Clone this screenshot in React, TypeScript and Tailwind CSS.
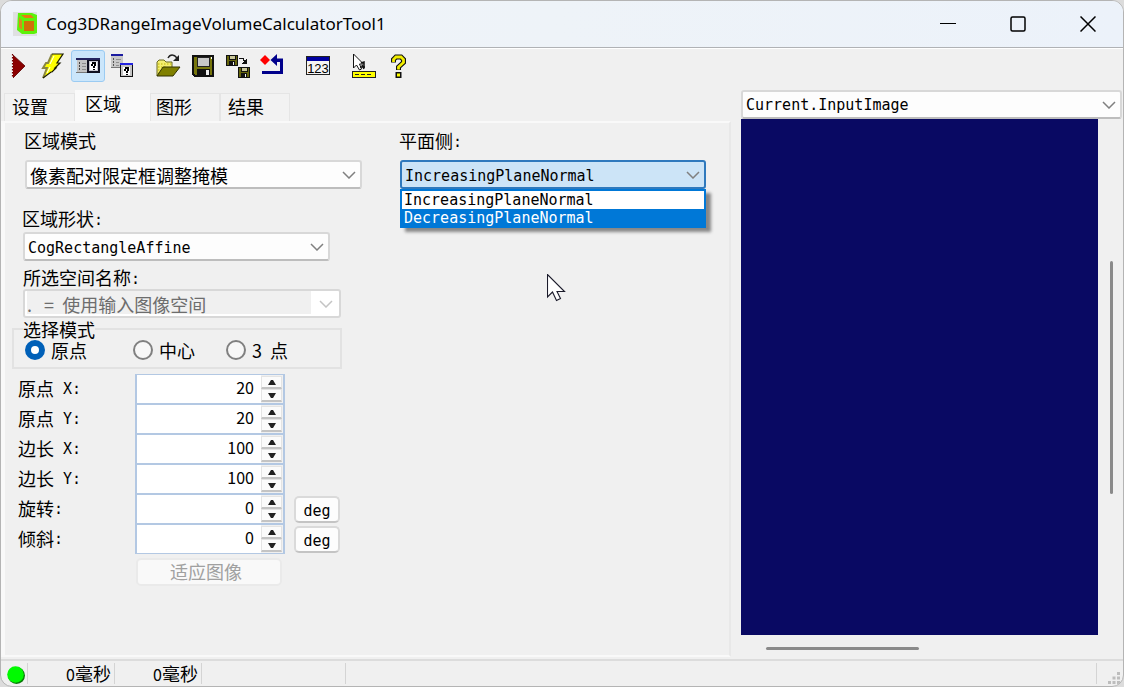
import React, { useState } from "react";

const CJK = "font-['Noto_Sans_CJK_SC',sans-serif]";
const MONO = "font-['DejaVu_Sans_Mono','Noto_Sans_CJK_SC',monospace] text-[15px]";
const LABEL = "flex h-[22px] items-center leading-[22px]";

function Latin({ children }: { children: React.ReactNode }) {
  return <span className="whitespace-pre pt-[3px] font-['DejaVu_Sans_Mono',monospace] text-[15px]">{children}</span>;
}

function Chevron({ className = "" }: { className?: string }) {
  return (
    <svg
      aria-hidden="true"
      viewBox="0 0 14 8"
      className={`pointer-events-none absolute right-[6px] top-1/2 h-2 w-[14px] -translate-y-1/2 ${className}`}
      fill="none"
      stroke="currentColor"
      strokeWidth="1.5"
    >
      <path d="M1 1l6 6 6-6" />
    </svg>
  );
}

type ComboProps = {
  id: string;
  label: string;
  value: string;
  textClass: string;
  boxClass?: string;
  tone?: string;
};

function Combo({ id, label, value, textClass, boxClass = "", tone = "border-[#d8d8d8] border-b-[#bdbdbd] bg-[#fdfdfd]" }: ComboProps) {
  return (
    <div className={`relative h-[29px] ${boxClass}`}>
      <select
        id={id}
        aria-label={label}
        className={`block h-full w-full appearance-none rounded-[3px] border-2 pl-[3px] pr-6 text-black outline-none ${tone} ${textClass}`}
      >
        <option>{value}</option>
      </select>
      <Chevron className="text-[#808080]" />
    </div>
  );
}

function IconRun() {
  return (
    <svg viewBox="0 0 26 26" className="size-[26px]">
      <path d="M8 2v23L20 13z" fill="#8b0000" />
      <path d="M8 2l12 11L8 25" fill="none" stroke="#5a0000" strokeWidth=".8" />
      <path d="M7.500 1v24" stroke="#700000" strokeWidth="1.2" strokeDasharray="1.5 1.5" />
    </svg>
  );
}
function IconBolt() {
  return (
    <svg viewBox="0 0 26 26" className="size-[26px]">
      <path d="M12 1h11l-6 9h3l-5 5h1l-4 4h-1l-8 6 3-10H3l4-5h1z" fill="#ffff00" />
      <path d="M12 1L8 10H6l-3 5h4L3 25" fill="none" stroke="#8a8740" strokeWidth="2" />
      <path d="M12 1h11l-6 9h3l-5 5h1l-4 4h-1l-8 6" fill="none" stroke="#1a1a00" strokeWidth="1.200" />
      <path d="M14 3l-4 8M10 14l-3 6" stroke="#fff" />
    </svg>
  );
}
function IconPanels() {
  return (
    <svg viewBox="0 0 26 26" className="size-[26px]" shapeRendering="crispEdges">
      <path d="M2 7h11v12H2z" fill="#c4c4c4" />
      <path d="M1 19h12v1H1z" fill="#777" />
      <path d="M12 6h13v14H12z" fill="#101020" />
      <path d="M14 8h9v10h-9z" fill="#c8c8d0" />
      <path d="M1 5h24v2H1z" fill="#252560" />
      <path d="M4 9h1v2H4zM4 12h1v2H4zM4 15h1v2H4z" fill="#444" />
      <path d="M7 10h4M7 13h4M7 16h4" stroke="#8c8c8c" />
      <path d="M15 9h7v8h-7z" fill="#fff" />
      <path d="M17 9h4v2h-4zM19 11h2v2h-2zM16 11h2v2h-2zM18 13h2v2h-2zM18 16h2v1h-2z" fill="#000" />
    </svg>
  );
}
function IconFloat() {
  return (
    <svg viewBox="0 0 26 26" className="size-[26px]" shapeRendering="crispEdges">
      <path d="M1 3h12v12H1z" fill="#c8c8c8" />
      <path d="M1 14h10v1H1z" fill="#777" />
      <path d="M1 1h12v2H1z" fill="#1c1ca0" />
      <path d="M3 5h1v2H3zM3 8h1v2H3zM3 11h1v2H3z" fill="#555" />
      <path d="M6 6h5M6 9h3M6 12h3" stroke="#909090" />
      <path d="M10 11h13v13H10z" fill="#111" />
      <path d="M11 12h11v11H11z" fill="#c4c4c4" />
      <path d="M10 10h13v2H10z" fill="#2424e0" />
      <path d="M13 14h7v8h-7z" fill="#fff" />
      <path d="M15 14h4v2h-4zM17 16h2v2h-2zM14 16h2v2h-2zM16 18h2v2h-2zM16 21h2v1h-2z" fill="#000" />
    </svg>
  );
}
function IconOpen() {
  return (
    <svg viewBox="0 0 26 26" className="size-[26px]">
      <path d="M2 23V9l2-2h5l2 2h6v5" fill="#f4ee70" stroke="#6b6b20" />
      <path d="M3 11h13M3 14h8M3 17h5M3 20h3" stroke="#bcb400" strokeDasharray="1.5 1.5" />
      <path d="M2 23L8 14h17l-7 9z" fill="#808000" stroke="#333300" />
      <path d="M13 5c2-4 6-4 9 0" fill="none" stroke="#222" strokeWidth="1.4" />
      <path d="M24 2v6h-6z" fill="#222" />
    </svg>
  );
}
function IconSave() {
  return (
    <svg viewBox="0 0 26 26" className="size-[26px]" shapeRendering="crispEdges">
      <path d="M3 3h20v20H5l-2-2z" fill="#77760c" stroke="#111" strokeWidth="2" />
      <path d="M7 4h12v9H7z" fill="#c8c8c8" stroke="#222" />
      <path d="M7 16h13v7H7z" fill="#111" />
      <path d="M16 17h3v5h-3z" fill="#eee" />
      <path d="M21 4h1v2h-1z" fill="#fff" />
    </svg>
  );
}
function IconSaveSet() {
  return (
    <svg viewBox="0 0 26 26" className="size-[26px]" shapeRendering="crispEdges">
      <g id="disk">
        <path d="M1 2h11v10H1z" fill="#66650c" stroke="#111" />
        <path d="M4 2h6v4H4z" fill="#c9c79a" stroke="#111" />
        <path d="M4 8h6v4H4z" fill="#111" />
        <path d="M8 9h1v3H8z" fill="#eee" />
      </g>
      <use href="#disk" x="12" y="12" />
      <path d="M14 5h4v2h2v2" fill="none" stroke="#111" />
      <path d="M22 5v6h-6z" fill="#111" />
    </svg>
  );
}
function IconReset() {
  return (
    <svg viewBox="0 0 26 26" className="size-[26px]">
      <path d="M5 2l5 5-5 5-5-5z" fill="#ff0000" />
      <path d="M10.500 7L17 1v4.500h6V21H2v-3h18V9h-3v4z" fill="#00008b" />
    </svg>
  );
}
function IconNumbers() {
  return (
    <svg viewBox="0 0 26 26" className="size-[26px]">
      <rect x="1.500" y="3.500" width="23" height="18" fill="#f4f4f4" stroke="#222" />
      <rect x="2" y="4" width="22" height="4" fill="#0000a0" />
      <text x="13" y="20" textAnchor="middle" fill="#000" className="font-['Liberation_Sans',sans-serif] text-[13px]">
        123
      </text>
    </svg>
  );
}
function IconMeasure() {
  return (
    <svg viewBox="0 0 26 26" className="size-[26px]">
      <path d="M3.500 1v14l3-3 3 5 2-1-2-5h4z" fill="#fff" stroke="#111" />
      <path d="M11 10l3-1v6M10 14h5M12 12l2 4" fill="none" stroke="#111" strokeWidth="1.500" />
      <rect x="2.500" y="18.500" width="23" height="6" fill="#ffff00" stroke="#222" />
      <path d="M5 21.500h18" stroke="#222" strokeDasharray="4 2" />
    </svg>
  );
}
function IconHelp() {
  return (
    <svg viewBox="0 0 26 26" className="size-[26px]" fill="none">
      <path d="M8.500 9.500v-3L11 4h5l2.500 2.500v3l-5 4.500v3" stroke="#111" strokeWidth="5" />
      <path d="M10.500 19h6v6h-6z" fill="#111" />
      <path d="M8.500 9v-2.500L11 4h5l2.500 2.500v3l-5 4.500v2.500" stroke="#f2ee00" strokeWidth="2.800" />
      <path d="M12 20.500h3v3h-3z" fill="#ffff00" />
    </svg>
  );
}

const toolGroups: { name: string; icon: React.ReactNode; on?: boolean }[][] = [
  [
    { name: "Run", icon: <IconRun /> },
    { name: "Electric mode", icon: <IconBolt /> },
    { name: "Local display", icon: <IconPanels />, on: true },
    { name: "Floating display", icon: <IconFloat /> },
  ],
  [
    { name: "Open", icon: <IconOpen /> },
    { name: "Save", icon: <IconSave /> },
    { name: "Save as", icon: <IconSaveSet /> },
    { name: "Reset", icon: <IconReset /> },
  ],
  [{ name: "Results", icon: <IconNumbers /> }],
  [
    { name: "Tooltips", icon: <IconMeasure /> },
    { name: "Help", icon: <IconHelp /> },
  ],
];

function TitleBar() {
  return (
    <header className="flex h-[47px] shrink-0 items-center border-b border-[#b0b2b5] bg-gradient-to-r from-[#eff3fa] via-[#eef3f8] to-[#ecf2fa] pl-3">
      <svg viewBox="0 0 24 24" className="size-6" aria-hidden="true">
        <rect width="24" height="24" fill="#dfe0e2" />
        <path d="M5 1h14l5 2v18l-3 1H9l-5-4z" fill="#5cf20c" />
        <path d="M8 3h10l3 3h-9z" fill="#e87a10" />
        <path d="M6 5l3 4v9l-3-3z" fill="#d8891c" />
        <rect x="11" y="9" width="10" height="10" fill="#cf7007" />
      </svg>
      <h1 className="pl-[9px] font-['Noto_Sans',sans-serif] text-[17px] leading-6 text-black">
        Cog3DRangeImageVolumeCalculatorTool1
      </h1>
      <div className="ml-auto flex h-full">
        <button aria-label="Minimize" className="grid w-[70px] place-items-center">
          <svg viewBox="0 0 16 16" className="size-4" stroke="#000"><path d="M0 7.500h16" /></svg>
        </button>
        <button aria-label="Maximize" className="grid w-[70px] place-items-center">
          <svg viewBox="0 0 16 16" className="size-4" stroke="#000" strokeWidth="1.500" fill="none">
            <rect x="1" y="1" width="14" height="14" rx="1.500" />
          </svg>
        </button>
        <button aria-label="Close" className="grid w-[70px] place-items-center">
          <svg viewBox="0 0 16 16" className="size-4" stroke="#000" strokeWidth="1.500"><path d="M.5.5l15 15M15.500.5l-15 15" /></svg>
        </button>
      </div>
    </header>
  );
}

function Toolbar() {
  return (
    <div role="toolbar" aria-label="Tools" className="flex h-[42px] shrink-0 gap-[11px] border-t border-white pt-px">
      {toolGroups.map((group, i) => (
        <div key={i} className="flex gap-px">
          {group.map((t) => (
            <button
              key={t.name}
              aria-label={t.name}
              aria-pressed={t.on}
              className={`grid h-8 w-[34px] place-items-center rounded-[3px] border ${
                t.on ? "border-[#9bcbf2] bg-[#cbe6fb]" : "border-transparent"
              }`}
            >
              {t.icon}
            </button>
          ))}
        </div>
      ))}
    </div>
  );
}

const tabs = [
  { name: "设置", box: "w-[71px] pl-[7px]" },
  { name: "区域", box: "w-[75px] pl-[9px]" },
  { name: "图形", box: "w-[70px] pl-[5px]" },
  { name: "结果", box: "w-[70px] pl-[7px]" },
];

function Tabs() {
  const [active, setActive] = useState("区域");
  return (
    <div role="tablist" className="flex h-[31px] items-end pl-[3px] text-[18px]">
      {tabs.map((t) => (
        <button
          key={t.name}
          role="tab"
          aria-selected={active === t.name}
          onClick={() => setActive(t.name)}
          className={`border border-b-0 text-left ${t.box} ${
            active === t.name
              ? "h-[31px] border-[#fafafa] bg-[#fafafa] pb-[5px] leading-[25px]"
              : "h-7 border-[#e5e5e5] bg-[#f2f2f2] pb-[3px] leading-6"
          }`}
        >
          {t.name}
        </button>
      ))}
    </div>
  );
}

const fields: { id: string; cjk: string; latin: string; value: number; unit?: string }[] = [
  { id: "origin-x", cjk: "原点", latin: " X:", value: 20 },
  { id: "origin-y", cjk: "原点", latin: " Y:", value: 20 },
  { id: "side-x", cjk: "边长", latin: " X:", value: 100 },
  { id: "side-y", cjk: "边长", latin: " Y:", value: 100 },
  { id: "rotation", cjk: "旋转", latin: ":", value: 0, unit: "deg" },
  { id: "skew", cjk: "倾斜", latin: ":", value: 0, unit: "deg" },
];

const SPIN =
  "grid flex-1 place-items-center border border-b-2 border-[#e4e4e4] border-b-[#c4c4c4] bg-[#fbfbfb]";

function Field({ f }: { f: (typeof fields)[number] }) {
  const [value, setValue] = useState(f.value);
  return (
    <div className="flex h-[30px] items-center">
      <label htmlFor={f.id} className="flex h-full w-[117px] items-center pb-[3px] leading-[22px]">
        {f.cjk}
        <Latin>{f.latin}</Latin>
      </label>
      <div className="flex h-full w-[150px] border-2 border-y border-[#b3c8e3] bg-white">
        <input
          id={f.id}
          inputMode="decimal"
          value={value}
          onChange={(e) => setValue(Number(e.target.value) || 0)}
          className="min-w-0 flex-1 bg-transparent pb-1 pr-[7px] text-right text-[16px] outline-none"
        />
        <div className="flex w-[22px] flex-col bg-[#f0f0f0] py-px pr-px">
          <button aria-label="Increase" onClick={() => setValue(value + 1)} className={SPIN}>
            <svg viewBox="0 0 8 5" className="h-[5px] w-2"><path d="M0 5l3-5h2l3 5z" fill="#222" /></svg>
          </button>
          <button aria-label="Decrease" onClick={() => setValue(value - 1)} className={SPIN}>
            <svg viewBox="0 0 8 5" className="h-[5px] w-2"><path d="M0 0h8L5 5H3z" fill="#222" /></svg>
          </button>
        </div>
      </div>
      {f.unit && (
        <button className={`ml-[9px] h-[27px] w-[46px] rounded-[5px] border-2 border-[#dadada] border-b-[#c4c4c4] bg-[#fdfdfd] pt-[3px] leading-5 ${MONO}`}>
          {f.unit}
        </button>
      )}
    </div>
  );
}

const modes = [
  { name: "原点", box: "w-[108px]" },
  { name: "中心", box: "w-[93px]" },
  { name: "3\u00a0\u00a0点", box: "" },
];

function RegionForm() {
  const [mode, setMode] = useState("原点");
  return (
    <div className="w-[350px] shrink-0">
      <label htmlFor="region-mode" className={`ml-3 ${LABEL}`}>区域模式</label>
      <Combo id="region-mode" label="区域模式" value="像素配对限定框调整掩模" textClass="pb-[2px] text-[18px]" boxClass="ml-[13px] mt-[9px]" />

      <label htmlFor="region-shape" className={`ml-[10px] mt-[18px] ${LABEL}`}>
        区域形状<Latin>:</Latin>
      </label>
      <Combo id="region-shape" label="区域形状" value="CogRectangleAffine" textClass={`pt-[3px] ${MONO}`} boxClass="ml-[11px] mt-[3px] w-[307px]" />

      <label htmlFor="space-name" className={`ml-[11px] mt-[5px] ${LABEL}`}>
        所选空间名称<Latin>:</Latin>
      </label>
      <div className="relative ml-[11px] mt-px h-[29px] w-[318px] rounded-[3px] border-2 border-[#d8d8d8] bg-white pb-[2px] pl-[2px] pr-7">
        <select
          id="space-name"
          disabled
          className="block h-full w-full appearance-none bg-[#f0f0f0] text-[18px] text-[#6d6d6d] opacity-100"
        >
          <option>.&nbsp;&nbsp;&nbsp;=&nbsp;&nbsp;使用输入图像空间</option>
        </select>
        <Chevron className="text-[#c4c4c4]" />
      </div>

      <fieldset className="mt-[3px] w-[330px] border-2 border-[#e2e2e2] pb-[5px] pl-[11px]">
        <legend className="-ml-[2px] leading-4">选择模式</legend>
        <div className="mt-px flex h-6 items-center">
          {modes.map((m) => (
            <label key={m.name} className={`flex items-center gap-[6px] leading-[22px] ${m.box}`}>
              <input
                type="radio"
                name="select-mode"
                checked={mode === m.name}
                onChange={() => setMode(m.name)}
                className="size-5 appearance-none rounded-full border-2 border-[#808080] bg-[#f7f7f7] checked:border-6 checked:border-[#0060b8] checked:bg-white"
              />
              {m.name}
            </label>
          ))}
        </div>
      </fieldset>

      <div className="ml-[6px] mt-[5px]">
        {fields.map((f) => (
          <Field key={f.id} f={f} />
        ))}
      </div>
      <button disabled className="ml-[124px] mt-1 block h-7 w-[146px] rounded-[5px] border-2 border-[#eaeaea] bg-[#f9f9f9] pb-[3px] pr-[6px] leading-5 text-[#a0a0a0]">
        适应图像
      </button>
    </div>
  );
}

function PlaneSide() {
  return (
    <div className="w-[306px]">
      <label htmlFor="plane-side" className={`-ml-px ${LABEL}`}>平面侧<Latin>:</Latin></label>
      <div className="relative mt-[9px]">
        <Combo
          id="plane-side"
          label="平面侧"
          value="IncreasingPlaneNormal"
          textClass={`pt-[3px] ${MONO}`}
          tone="border-[#2f79bd] bg-[#cce4f7]"
        />
        <ul
          role="listbox"
          aria-label="平面侧"
          className={`absolute left-0 top-[29px] w-full border-2 border-b-0 border-[#0078d7] bg-white leading-[18px] shadow-[5px_4px_3px_0_#888] ${MONO}`}
        >
          <li role="option" aria-selected="false" className="h-[18px] pl-[2px] text-black">IncreasingPlaneNormal</li>
          <li role="option" aria-selected="true" className="h-[19px] bg-[#0078d7] pl-[2px] text-white">DecreasingPlaneNormal</li>
        </ul>
        <svg viewBox="0 0 19 28" className="absolute left-[147px] top-[114px] h-7 w-[19px]" aria-hidden="true">
          <path d="M.5.5v22.500l5-5 4 8.500 4-2-3.500-7h7.500z" fill="#fff" stroke="#1b1b2b" strokeWidth="1.100" />
        </svg>
      </div>
    </div>
  );
}

function Display() {
  return (
    <section className="flex flex-col pl-px">
      <Combo id="display" label="Image" value="Current.InputImage" textClass={`pt-[2px] ${MONO}`} />
      <div className="flex flex-1">
        <div className="flex flex-1 flex-col">
          <div role="img" aria-label="Range image" className="flex-1 bg-[#090963]" />
          <div className="flex h-6 items-center pt-[2px]">
            <div className="grow-[25]" />
            <div className="h-[3px] grow-[153] rounded-full bg-[#8a8a8a]" />
            <div className="grow-[179]" />
          </div>
        </div>
        <div className="flex w-6 flex-col items-center pb-6 pl-[2px]">
          <div className="grow-[142]" />
          <div className="w-[3px] grow-[233] rounded-full bg-[#8a8a8a]" />
          <div className="grow-[141]" />
        </div>
      </div>
    </section>
  );
}

function StatusBar() {
  return (
    <footer className="flex h-[27px] shrink-0 items-stretch border-t-2 border-[#dcdcdc] py-[2px] leading-[20px]">
      <div className="flex w-[27px] items-center border-r border-[#d4d4d4] pl-[6px] pt-[2px]">
        <svg viewBox="0 0 18 18" className="size-[18px]" aria-label="Ready">
          <circle cx="9.500" cy="9.500" r="8.500" fill="#087a08" />
          <circle cx="8.500" cy="8.500" r="8.300" fill="#00fa00" />
        </svg>
      </div>
      <div className="w-[87px] border-r border-[#d4d4d4] pr-[3px] text-right"><span className="text-[16px]">0</span>毫秒</div>
      <div className="w-[87px] border-r border-[#d4d4d4] pr-[3px] text-right"><span className="text-[16px]">0</span>毫秒</div>
      <div className="w-36 border-r border-[#d4d4d4]" />
      <div className="flex-1 border-r border-[#d4d4d4]" />
      <div className="flex w-[26px] items-end justify-end pr-[3px]">
        <svg viewBox="0 0 12 12" className="size-3" fill="#bdbdbd" aria-hidden="true">
          <path d="M9 0h3v3H9zM9 4.500h3v3H9zM4.500 4.500h3v3h-3zM9 9h3v3H9zM4.500 9h3v3h-3zM0 9h3v3H0z" />
        </svg>
      </div>
    </footer>
  );
}

export default function App() {
  return (
    <div className="bg-[#dcdcdc]">
      <main className={`flex min-h-screen flex-col overflow-hidden rounded-xl border border-[#b4b4b4] bg-[#f0f0f0] text-[18px] text-black ${CJK}`}>
        <TitleBar />
        <Toolbar />
        <div className="grid flex-1 grid-cols-[minmax(0,739fr)_minmax(0,382fr)] border-r border-transparent">
          <div className="flex flex-col">
            <Tabs />
            <section className="mb-[2px] mr-[9px] flex flex-1 gap-[38px] border-2 border-l-[4px] border-[#f9f9f9] border-r-[#e8e8e8] pl-[7px] pt-[6px]">
              <RegionForm />
              <PlaneSide />
            </section>
          </div>
          <Display />
        </div>
        <StatusBar />
      </main>
    </div>
  );
}
